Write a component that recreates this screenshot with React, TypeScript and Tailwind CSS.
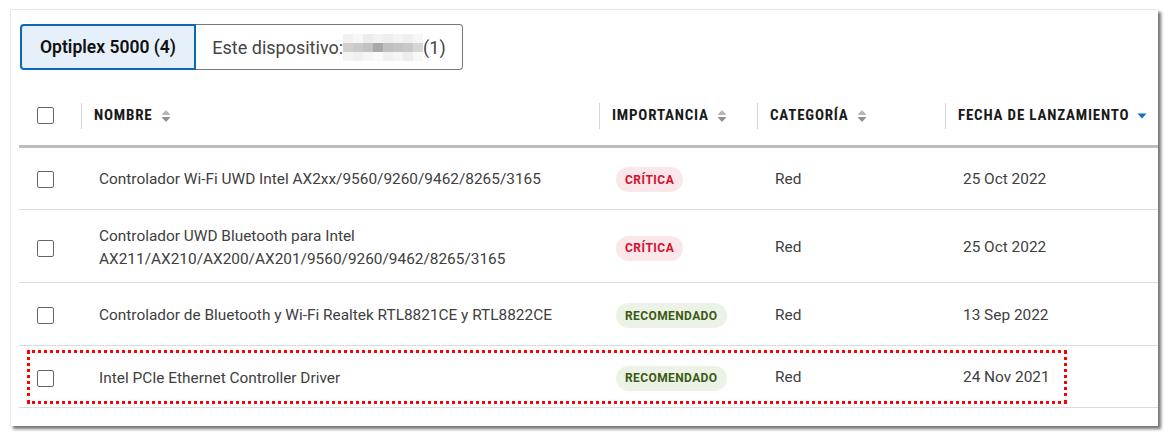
import { ReactNode } from "react";

type Row = {
  name: string[];
  level: "critica" | "recomendado";
  category: string;
  date: string;
  height: string;
  marked?: boolean;
};

const rows: Row[] = [
  { name: ["Controlador Wi-Fi UWD Intel AX2xx/9560/9260/9462/8265/3165"], level: "critica", category: "Red", date: "25 Oct 2022", height: "h-[62px] pt-[2px]" },
  {
    name: ["Controlador UWD Bluetooth para Intel", "AX211/AX210/AX200/AX201/9560/9260/9462/8265/3165"],
    level: "critica",
    category: "Red",
    date: "25 Oct 2022",
    height: "h-[73px] pt-[4px]",
  },
  { name: ["Controlador de Bluetooth y Wi-Fi Realtek RTL8821CE y RTL8822CE"], level: "recomendado", category: "Red", date: "13 Sep 2022", height: "h-[63px] pt-[3px]" },
  { name: ["Intel PCIe Ethernet Controller Driver"], level: "recomendado", category: "Red", date: "24 Nov 2021", height: "h-[62px] pt-[3px]", marked: true },
];

// pixelated blur over the device name
const blur = [
  ["#f1f1f1", "#f7f7f7", "#ececec", "#f2f2f2", "#eeeeee", "#f3f3f3", "#efefef", "#f6f6f6"],
  ["#d2cfcc", "#c9c9c9", "#c2c2c2", "#a9a9a9", "#c0c0c0", "#c4c4c4", "#c8c8c8", "#d6d6d6"],
  ["#f4f4f4", "#f0f0f0", "#f6f6f6", "#fafafa", "#f1f1f1", "#f5f5f5", "#ededed", "#f8f8f8"],
];

function Checkbox() {
  return <span className="block h-[17px] w-[17px] rounded-[2px] border-[1.5px] border-[#666] bg-white" />;
}

function SortIcon() {
  return (
    <svg width="10" height="14" viewBox="0 0 10 14" className="ml-[8px]">
      <path d="M5 1 L9.5 6 H0.5 Z" fill="#b5b5b5" />
      <path d="M5 13 L9.5 8 H0.5 Z" fill="#8f8f8f" />
    </svg>
  );
}

function HeadCell({ children, className }: { children: ReactNode; className: string }) {
  return (
    <div className={`flex h-full items-center ${className}`}>
      <span className="h-[26px] w-px bg-[#d6d6d6]" />
      <div
        className="flex items-center pl-3 text-[15px] font-bold tracking-[0.8px] text-[#1a1a1a]"
        style={{ fontFamily: "'Liberation Sans Narrow', 'Roboto Condensed', Roboto, sans-serif" }}
      >
        {children}
      </div>
    </div>
  );
}

function Badge({ level }: { level: Row["level"] }) {
  return level === "critica" ? (
    <span className="inline-flex h-[25px] items-center rounded-full bg-[#fbe7ea] px-[9px] text-[12px] font-bold tracking-[0.5px] text-[#d3102d]">
      CRÍTICA
    </span>
  ) : (
    <span className="inline-flex h-[25px] items-center rounded-full bg-[#edf2e6] px-[9px] text-[12px] font-bold tracking-[0.4px] text-[#3a5a12]">
      RECOMENDADO
    </span>
  );
}

export default function App() {
  return (
    <div className="h-[436px] w-[1169px] bg-white pl-[10px] pt-[9px]" style={{ fontFamily: "Roboto, 'Liberation Sans', sans-serif" }}>
      <div className="h-[417px] w-[1148px] border border-r-0 border-b-0 border-[#e6e6e6] bg-white pl-[8px] pt-[14px] shadow-[3px_3px_3px_rgba(0,0,0,0.55)]">
        <div className="ml-px flex h-[46px]">
          <div className="flex w-[176px] items-center justify-center rounded-l-[4px] border-2 border-[#0a68b8] bg-[#e6f0fa] text-[17.5px] font-semibold text-[#111]">
            Optiplex 5000 (4)
          </div>
          <div className="flex w-[267px] items-center justify-center rounded-r-[4px] border border-l-0 border-[#777] text-[18px] text-[#444]">
            <span>Este dispositivo:</span>
            <span className="grid grid-cols-8">
              {blur.flatMap((r, i) => r.map((c, j) => <span key={`${i}-${j}`} className="h-[9px] w-[10px]" style={{ background: c }} />))}
            </span>
            <span>(1)</span>
          </div>
        </div>

        <div className="mt-[19px]">
          <div className="flex h-[59px] items-center border-b-[3px] border-[#bdbdbd] pb-[3px]">
            <div className="w-[62px] pl-[18px]">
              <Checkbox />
            </div>
            <HeadCell className="w-[518px]">
              NOMBRE
              <SortIcon />
            </HeadCell>
            <HeadCell className="w-[158px]">
              IMPORTANCIA
              <SortIcon />
            </HeadCell>
            <HeadCell className="w-[188px]">
              CATEGORÍA
              <SortIcon />
            </HeadCell>
            <HeadCell className="flex-1">
              FECHA DE LANZAMIENTO
              <svg width="10" height="6" viewBox="0 0 10 6" className="ml-[8px]">
                <path d="M0.5 0.5 H9.5 L5 5.5 Z" fill="#0b6fc7" />
              </svg>
            </HeadCell>
          </div>

          {rows.map((row, i) => (
            <div key={i} className={`relative flex items-center border-b border-[#dcdcdc] text-[15.4px] text-[#404040] ${row.height}`}>
              <div className="w-[62px] pl-[18px]">
                <Checkbox />
              </div>
              <div className="w-[518px] pl-[18px] leading-[23px]">
                {row.name.map((line) => (
                  <div key={line}>{line}</div>
                ))}
              </div>
              <div className="w-[158px] pl-[17px]">
                <Badge level={row.level} />
              </div>
              <div className="w-[188px] pl-[18px]">{row.category}</div>
              <div className="flex-1 pl-[18px]">{row.date}</div>
              {row.marked && (
                <div className="pointer-events-none absolute left-[8px] top-[4px] h-[54px] w-[1040px] border-[3px] border-dotted border-[#ff0000]" />
              )}
            </div>
          ))}
        </div>
      </div>
    </div>
  );
}
